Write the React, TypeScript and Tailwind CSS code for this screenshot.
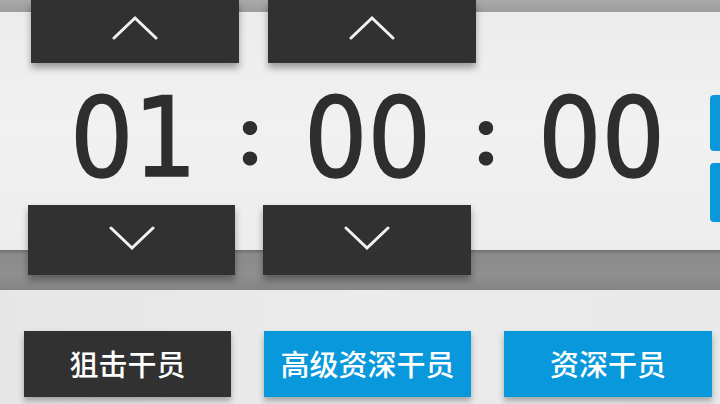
import React from "react";

const Chevron = ({ dir }: { dir: "up" | "down" }) => (
  <svg width="46" height="26" viewBox="0 0 46 26" fill="none">
    <path
      d={dir === "up" ? "M2 23 L23 3 L44 23" : "M2 3 L23 23 L44 3"}
      stroke="#f2f2f2"
      strokeWidth="3"
      strokeLinecap="round"
      strokeLinejoin="miter"
    />
  </svg>
);

const DarkBtn = ({ w, h, children }: { w: string; h: string; children: React.ReactNode }) => (
  <div
    className={`${w} ${h} shrink-0 bg-[#313131] flex items-center justify-center shadow-[0_5px_7px_rgba(0,0,0,0.35)]`}
  >
    {children}
  </div>
);

const Digits = ({ text, w }: { text: string; w: string }) => (
  <div className={`${w} shrink-0 flex justify-center`}>
    <div
      className="text-[#2e2e2e] text-[111px] leading-none scale-x-[0.9] mt-[6px] [-webkit-text-stroke:1.5px_#2e2e2e]"
      style={{ fontFamily: '"DejaVu Sans", sans-serif' }}
    >
      {text}
    </div>
  </div>
);

const Colon = ({ w }: { w: string }) => (
  <div
    className={`${w} shrink-0 text-center text-[#2e2e2e] text-[88px] font-black leading-none -mt-[6px]`}
    style={{ fontFamily: 'Lato, sans-serif' }}
  >
    :
  </div>
);

const cjk = { fontFamily: '"Noto Sans CJK SC", "Noto Sans", sans-serif' };

export default function App() {
  return (
    <div className="w-[720px] h-[404px] overflow-hidden bg-[linear-gradient(to_right,#e6e6e6,#ebebeb_50%,#e9e9e9)]">
      <section className="h-[290px] flex flex-col bg-[linear-gradient(to_bottom,#a9a9a9_0px,#9c9c9c_12px,#ececec_12px,#f1f1f1_130px,#ededed_250px,#6f6f6f_250px,#8a8a8a_254px,#8f8f8f_275px,#848484_290px)]">
        {/* Up buttons */}
        <div className="flex pl-[31px] gap-[29px]">
          <DarkBtn w="w-[208px]" h="h-[63px]">
            <div className="-mt-[8px]">
              <Chevron dir="up" />
            </div>
          </DarkBtn>
          <DarkBtn w="w-[208px]" h="h-[63px]">
            <div className="-mt-[8px]">
              <Chevron dir="up" />
            </div>
          </DarkBtn>
        </div>

        {/* Digits */}
        <div className="h-[142px] flex items-center pl-[30px]">
          <Digits text="01" w="w-[207px]" />
          <Colon w="w-[26px]" />
          <Digits text="00" w="w-[209px]" />
          <Colon w="w-[28px]" />
          <Digits text="00" w="w-[203px]" />
          <div className="ml-[7px] shrink-0 self-start mt-[32px] flex flex-col gap-[12px]">
            <div className="w-[30px] h-[56px] rounded-[4px] bg-[#0a98dc]" />
            <div className="w-[30px] h-[59px] rounded-[4px] bg-[#0a98dc]" />
          </div>
        </div>

        {/* Down buttons */}
        <div className="flex pl-[28px] gap-[28px]">
          <DarkBtn w="w-[207px]" h="h-[70px]">
            <div className="mb-[4px]">
              <Chevron dir="down" />
            </div>
          </DarkBtn>
          <DarkBtn w="w-[208px]" h="h-[70px]">
            <div className="mb-[4px]">
              <Chevron dir="down" />
            </div>
          </DarkBtn>
        </div>
      </section>

      {/* Bottom tag buttons */}
      <div className="flex pt-[41px] pl-[24px] gap-[33px] font-medium" style={cjk}>
        <div className="w-[207px] h-[66px] shrink-0 bg-[#313131] text-white text-[29px] flex items-center justify-center shadow-[0_4px_6px_rgba(0,0,0,0.3)]">
          狙击干员
        </div>
        <div className="w-[207px] h-[66px] shrink-0 bg-[#0a98dc] text-white text-[29px] flex items-center justify-center shadow-[0_4px_6px_rgba(0,0,0,0.3)]">
          高级资深干员
        </div>
        <div className="w-[208px] h-[66px] shrink-0 bg-[#0a98dc] text-white text-[29px] flex items-center justify-center shadow-[0_4px_6px_rgba(0,0,0,0.3)]">
          资深干员
        </div>
      </div>
    </div>
  );
}
